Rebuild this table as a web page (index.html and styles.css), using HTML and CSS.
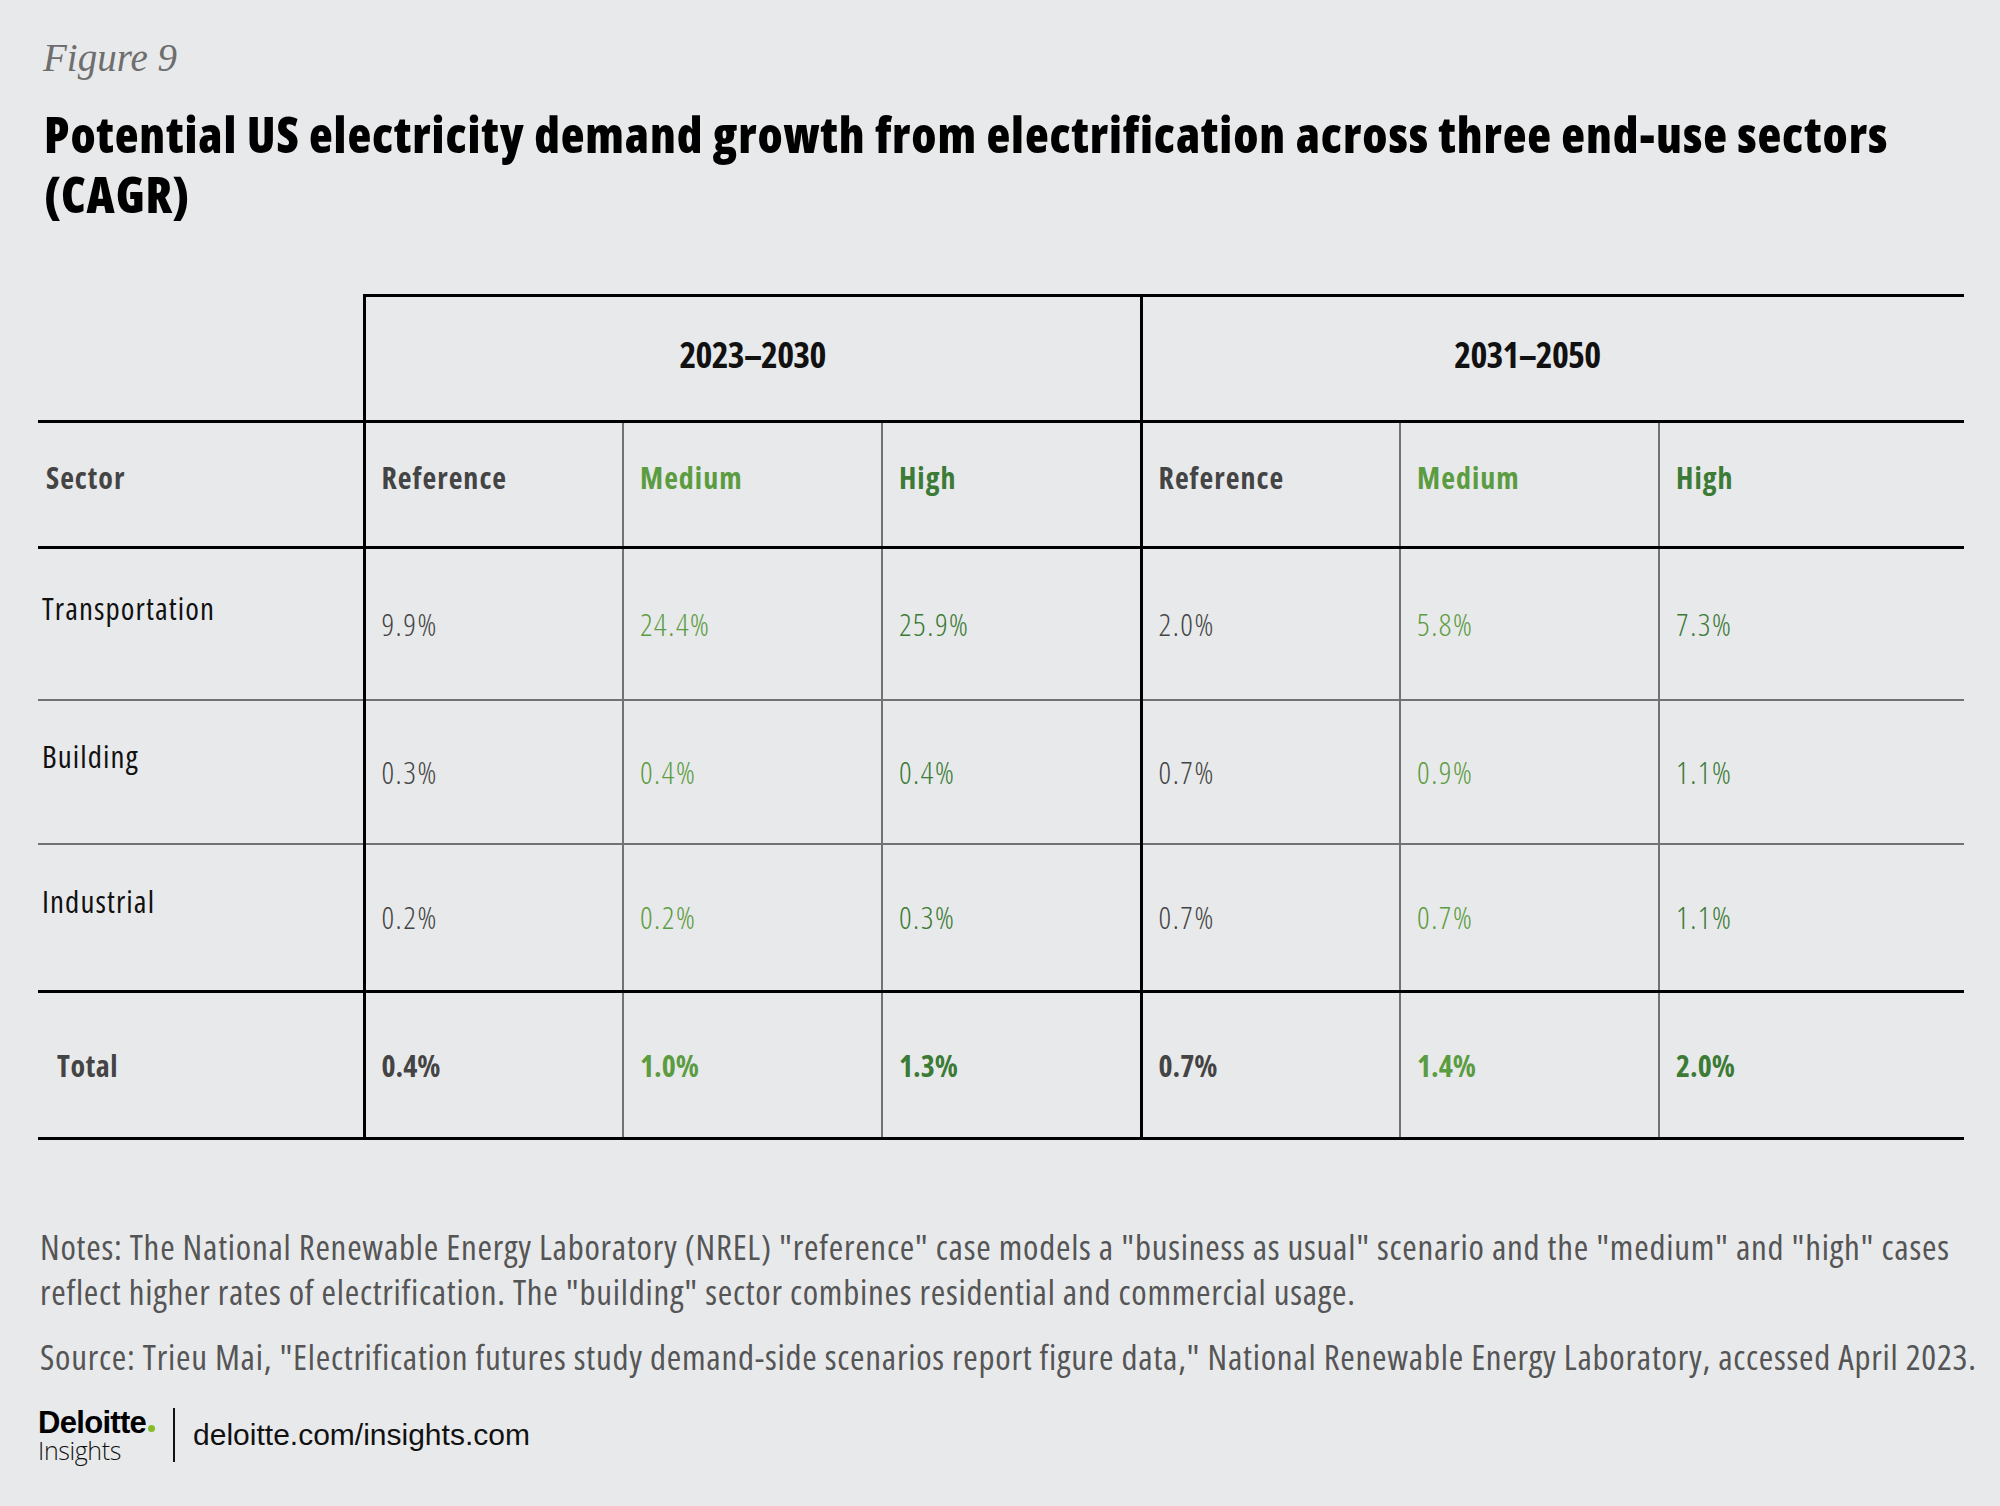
FILE: index.html
```html
<!DOCTYPE html>
<html lang="en">
<head>
<meta charset="utf-8">
<title>Figure 9</title>
<link rel="stylesheet" href="styles.css">
</head>
<body>
<div class="page">
  <div class="fig-label">Figure 9</div>
  <h1 class="title">Potential US electricity demand growth from electrification across three end-use sectors (CAGR)</h1>

  <table class="data">
    <colgroup>
      <col class="c-sector">
      <col class="c-val"><col class="c-val"><col class="c-val">
      <col class="c-val"><col class="c-val"><col class="c-last">
    </colgroup>
    <thead>
      <tr class="group-row">
        <th class="blank"></th>
        <th class="group" colspan="3">2023–2030</th>
        <th class="group group-2" colspan="3">2031–2050</th>
      </tr>
      <tr class="head-row">
        <th class="sector-h">Sector</th>
        <th class="h ref divide">Reference</th>
        <th class="h med">Medium</th>
        <th class="h high">High</th>
        <th class="h ref divide">Reference</th>
        <th class="h med">Medium</th>
        <th class="h high">High</th>
      </tr>
    </thead>
    <tbody>
      <tr class="r1">
        <td class="sector">Transportation</td>
        <td class="v ref divide">9.9%</td>
        <td class="v med">24.4%</td>
        <td class="v high">25.9%</td>
        <td class="v ref divide">2.0%</td>
        <td class="v med">5.8%</td>
        <td class="v high">7.3%</td>
      </tr>
      <tr class="r2">
        <td class="sector">Building</td>
        <td class="v ref divide">0.3%</td>
        <td class="v med">0.4%</td>
        <td class="v high">0.4%</td>
        <td class="v ref divide">0.7%</td>
        <td class="v med">0.9%</td>
        <td class="v high">1.1%</td>
      </tr>
      <tr class="r3">
        <td class="sector">Industrial</td>
        <td class="v ref divide">0.2%</td>
        <td class="v med">0.2%</td>
        <td class="v high">0.3%</td>
        <td class="v ref divide">0.7%</td>
        <td class="v med">0.7%</td>
        <td class="v high">1.1%</td>
      </tr>
      <tr class="total">
        <td class="sector total-label">Total</td>
        <td class="v ref divide">0.4%</td>
        <td class="v med">1.0%</td>
        <td class="v high">1.3%</td>
        <td class="v ref divide">0.7%</td>
        <td class="v med">1.4%</td>
        <td class="v high">2.0%</td>
      </tr>
    </tbody>
  </table>

  <div class="notes">
    <p>Notes: The National Renewable Energy Laboratory (NREL) "reference" case models a "business as usual" scenario and the "medium" and "high" cases reflect higher rates of electrification. The "building" sector combines residential and commercial usage.</p>
    <p>Source: Trieu Mai, "Electrification futures study demand-side scenarios report figure data," National Renewable Energy Laboratory, accessed April 2023.</p>
  </div>

  <footer class="footer">
    <div class="logo">
      <div class="logo-top">Deloitte<span class="dot"></span></div>
      <div class="logo-bottom">Insights</div>
    </div>
    <div class="divider"></div>
    <div class="url">deloitte.com/insights.com</div>
  </footer>
</div>
</body>
</html>
```

FILE: styles.css
```css
html, body {
  margin: 0;
  padding: 0;
  background: #e8e9eb;
}

.page {
  width: 2000px;
  height: 1506px;
  box-sizing: border-box;
  padding: 40px 15px 0 38px;
  font-family: "Open Sans", "Liberation Sans", sans-serif;
  font-stretch: 75%;
  color: #111;
}

.fig-label {
  font-family: "Liberation Serif", serif;
  font-style: italic;
  font-stretch: 100%;
  font-size: 39px;
  line-height: 36px;
  color: #6e6e6e;
  padding-left: 5px;
}

.title {
  margin: 28px 0 0 6px;
  max-width: 1900px;
  font-size: 49px;
  line-height: 60px;
  font-weight: 800;
  letter-spacing: 0.9px;
  color: #000;
}

/* ---------- table ---------- */
.data {
  margin-top: 70px;
  width: 1925px;
  border-collapse: collapse;
  table-layout: fixed;
}

.c-sector { width: 326px; }
.c-val { width: 259px; }
.c-last { width: 305px; }

.data th,
.data td {
  padding: 0;
  text-align: left;
}

.group-row { height: 126px; }
.data .group {
  border-top: 3px solid #000;
  border-left: 3px solid #000;
  border-bottom: 3px solid #000;
  text-align: center;
  font-size: 36px;
  font-weight: 700;
  letter-spacing: -0.8px;
  color: #111;
  padding-bottom: 8px;
}
.data .group-2 { padding-right: 52px; }
.data .blank { border-bottom: 3px solid #000; }

.head-row { height: 126px; }
.data .head-row th {
  border-bottom: 3px solid #000;
  font-size: 30px;
  font-weight: 700;
  letter-spacing: 1px;
  padding-bottom: 14px;
}
.data .sector-h { color: #444; padding-left: 8px; }

.data .h,
.data .v {
  border-left: 2px solid #727272;
  padding-left: 16px;
}
.data .divide { border-left: 3px solid #000; }

.ref { color: #444; }
.med { color: #5c9c41; }
.high { color: #3b7b36; }

.data .v {
  font-size: 31px;
  font-weight: 300;
  letter-spacing: 1.5px;
  vertical-align: middle;
}

.data .sector {
  font-size: 31px;
  font-weight: 400;
  letter-spacing: 1.1px;
  color: #111;
  padding-left: 4px;
  padding-bottom: 32px;
  vertical-align: middle;
}

.r1 { height: 152px; }
.r2 { height: 144px; }
.r3 { height: 148px; }
.total { height: 147px; }

.data .r1 td,
.data .r2 td { border-bottom: 2px solid #727272; }
.data .r3 td { border-bottom: 3px solid #000; }
.data .total td { border-bottom: 3px solid #000; }
.data .total .v {
  font-size: 30px;
  font-weight: 700;
  letter-spacing: 0;
}
.data .total-label {
  font-weight: 700;
  font-size: 30px;
  letter-spacing: 0.6px;
  color: #444;
  padding-left: 19px;
  padding-bottom: 0;
}

/* ---------- notes ---------- */
.notes {
  margin-top: 84px;
  font-size: 35px;
  line-height: 45px;
  letter-spacing: 0.75px;
  color: #555;
  padding-left: 2px;
}
.notes p { margin: 0 0 20px 0; }
.notes p:last-child { margin-bottom: 0; }

/* ---------- footer ---------- */
.footer {
  margin-top: 28px;
  display: flex;
  align-items: center;
  gap: 18px;
}
.logo { display: flex; flex-direction: column; }
.logo-top {
  font-family: "Liberation Sans", sans-serif;
  font-stretch: 100%;
  font-size: 31px;
  line-height: 31px;
  font-weight: 700;
  letter-spacing: -0.7px;
  color: #000;
  display: flex;
  align-items: flex-end;
}
.dot {
  width: 7px;
  height: 7px;
  border-radius: 50%;
  background: #86bc25;
  margin: 0 0 6px 2px;
}
.logo-bottom {
  font-family: "Open Sans", sans-serif;
  font-stretch: 100%;
  font-weight: 300;
  font-size: 25px;
  line-height: 25px;
  color: #111;
  letter-spacing: -0.4px;
}
.divider {
  width: 2px;
  height: 54px;
  background: #111;
}
.url {
  font-family: "Liberation Sans", sans-serif;
  font-stretch: 100%;
  font-size: 30px;
  color: #111;
}
```
